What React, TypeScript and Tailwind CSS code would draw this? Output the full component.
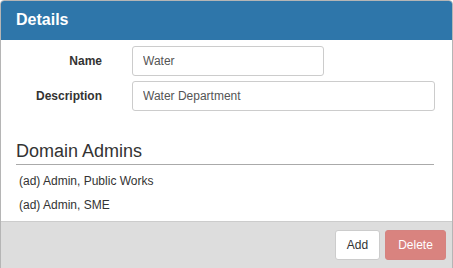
export default function App() {
  const admins = ["(ad) Admin, Public Works", "(ad) Admin, SME"];

  return (
    <div
      className="h-[268px] w-[453px] overflow-hidden bg-white text-[#333]"
      style={{ fontFamily: '"Liberation Sans", Arial, sans-serif' }}
    >
      <div className="flex h-[280px] flex-col rounded-t-[4px] border border-[#b5b5b5]">
        {/* Header */}
        <div className="flex h-[39px] items-center rounded-t-[3px] bg-[#2e76aa] px-[15px] pb-[2px]">
          <h3 className="text-[16px] font-bold text-white">Details</h3>
        </div>

        {/* Body */}
        <div className="flex-1 px-[15px] pt-[6px]">
          <div className="flex items-center">
            <label className="w-[86px] text-right text-[12px] font-bold">Name</label>
            <input
              readOnly
              value="Water"
              className="ml-[30px] h-[30px] w-[192px] rounded-[3px] border border-[#ccc] px-[10px] text-[12px] text-[#555] outline-none"
            />
          </div>
          <div className="mt-[5px] flex items-center">
            <label className="w-[86px] text-right text-[12px] font-bold">Description</label>
            <input
              readOnly
              value="Water Department"
              className="ml-[30px] h-[30px] w-[303px] rounded-[3px] border border-[#ccc] px-[10px] text-[12px] text-[#555] outline-none"
            />
          </div>

          <h4 className="mt-[30px] w-[418px] border-b border-[#aaa] pb-[2px] text-[18px] leading-[21px]">
            Domain Admins
          </h4>
          <ul className="mt-[6px] pl-[3px] text-[12px]">
            {admins.map((a) => (
              <li key={a} className="h-[24px] leading-[20px]">
                {a}
              </li>
            ))}
          </ul>
        </div>

        {/* Footer */}
        <div className="flex h-[58px] items-start justify-end gap-[5px] border-t border-[#ccc] bg-[#ddd] pr-[6px] pt-[8px]">
          <button className="h-[30px] w-[45px] rounded-[3px] border border-[#ccc] bg-white text-[12px] text-[#333]">
            Add
          </button>
          <button className="h-[30px] w-[61px] rounded-[3px] border border-[#d58380] bg-[#d9837f] text-[12px] text-white">
            Delete
          </button>
        </div>
      </div>
    </div>
  );
}
